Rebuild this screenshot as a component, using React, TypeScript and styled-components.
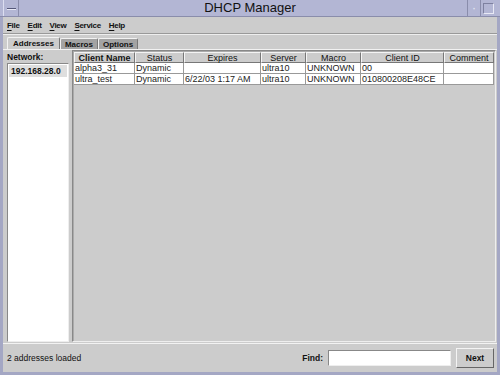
import styled, { createGlobalStyle } from "styled-components"

const GlobalStyle = createGlobalStyle`
  html, body { margin: 0; padding: 0; background: #cccccc; }
  body { font-family: "Liberation Sans", Arial, sans-serif; }
`

const columns = [
  { title: "Client Name", width: 61, bold: true },
  { title: "Status", width: 49 },
  { title: "Expires", width: 77 },
  { title: "Server", width: 45 },
  { title: "Macro", width: 55 },
  { title: "Client ID", width: 83 },
  { title: "Comment", width: 50 },
]

const rows = [
  ["alpha3_31", "Dynamic", "", "ultra10", "UNKNOWN", "00", ""],
  ["ultra_test", "Dynamic", "6/22/03 1:17 AM", "ultra10", "UNKNOWN", "010800208E48CE", ""],
]

export default function App() {
  return (
    <>
      <GlobalStyle />
      <Window>
        <TitleBar>
          <MenuBox><span /></MenuBox>
          <Title>DHCP Manager</Title>
          <WinButtons>
            <MinButton>·</MinButton>
            <MaxButton><i /></MaxButton>
          </WinButtons>
        </TitleBar>
        <Frame>
          <MenuBar>
            {["File", "Edit", "View", "Service", "Help"].map(m => (
              <MenuItem key={m}><u>{m[0]}</u>{m.slice(1)}</MenuItem>
            ))}
          </MenuBar>
          <Separator />
          <Tabs>
            <Tab $active>Addresses</Tab>
            <Tab>Macros</Tab>
            <Tab>Options</Tab>
          </Tabs>
          <Body>
            <NetworkPane>
              <Label>Network:</Label>
              <NetList>
                <NetItem>192.168.28.0</NetItem>
              </NetList>
            </NetworkPane>
            <TablePane>
              <Table>
                <HeaderRow>
                  {columns.map(c => (
                    <HeaderCell key={c.title} $w={c.width} $bold={c.bold}>{c.title}</HeaderCell>
                  ))}
                </HeaderRow>
                {rows.map((r, i) => (
                  <Row key={i}>
                    {r.map((v, j) => (
                      <Cell key={j} $w={columns[j].width}>{v}</Cell>
                    ))}
                  </Row>
                ))}
              </Table>
            </TablePane>
          </Body>
          <StatusBar>
            <StatusText>2 addresses loaded</StatusText>
            <FindLabel>Find:</FindLabel>
            <FindInput />
            <NextButton>Next</NextButton>
          </StatusBar>
        </Frame>
      </Window>
    </>
  )
}

const Window = styled.div`
  width: 500px;
  height: 375px;
  display: flex;
  flex-direction: column;
  background: #cccccc;
  overflow: hidden;
`
const TitleBar = styled.div`
  height: 16px;
  display: flex;
  align-items: stretch;
  background: #b3b6d4;
  border-bottom: 1px solid #8a8dab;
`
const MenuBox = styled.div`
  width: 14px;
  margin-left: 3px;
  border-left: 1px solid #dcdef0;
  border-right: 1px solid #8a8dab;
  display: flex;
  align-items: center;
  justify-content: center;
  span {
    width: 9px;
    height: 1px;
    background: #55587a;
    box-shadow: 0 1px 0 #e8e9f5;
  }
`
const Title = styled.div`
  flex: 1;
  text-align: center;
  font-size: 13px;
  line-height: 16px;
  color: #111;
  padding-left: 14px;
`
const WinButtons = styled.div`
  display: flex;
  margin-right: 4px;
`
const MinButton = styled.div`
  width: 12px;
  border-left: 1px solid #8a8dab;
  font-size: 12px;
  line-height: 16px;
  text-align: center;
  color: #e8e9f5;
`
const MaxButton = styled.div`
  width: 15px;
  border-left: 1px solid #8a8dab;
  display: flex;
  align-items: center;
  justify-content: center;
  i {
    width: 9px;
    height: 9px;
    border: 1px solid #7e81a0;
    border-right-color: #e8e9f5;
    border-bottom-color: #e8e9f5;
  }
`
const Frame = styled.div`
  flex: 1;
  display: flex;
  flex-direction: column;
  border-left: 3px solid #a4a7c4;
  border-right: 3px solid #a4a7c4;
  border-bottom: 3px solid #a4a7c4;
  min-height: 0;
`
const MenuBar = styled.div`
  height: 16px;
  box-sizing: border-box;
  display: flex;
  align-items: center;
  gap: 8px;
  padding: 1px 0 0 4px;
`
const MenuItem = styled.span`
  font-size: 8px;
  font-weight: bold;
  letter-spacing: -0.3px;
  color: #111;
  u { text-decoration-thickness: 1px; text-underline-offset: 2px; }
`
const Separator = styled.div`
  height: 0;
  margin: 0 0 2px;
  border-top: 1px solid #999;
  border-bottom: 1px solid #eee;
`
const Tabs = styled.div`
  display: flex;
  gap: 0;
  padding-left: 4px;
  height: 12px;
  align-items: flex-end;
`
const Tab = styled.div<{ $active?: boolean }>`
  height: ${p => (p.$active ? "12px" : "11px")};
  padding: 0 ${p => (p.$active ? "5px" : "4px")};
  box-sizing: border-box;
  font-size: 8px;
  font-weight: bold;
  line-height: 11px;
  color: #111;
  background: ${p => (p.$active ? "#cccccc" : "#a3a3a3")};
  border-top: 1px solid #f2f2f2;
  border-left: 1px solid #f2f2f2;
  border-right: 1px solid #777;
  border-radius: 2px 2px 0 0;
`
const Body = styled.div`
  flex: 1;
  display: flex;
  gap: 3px;
  padding: 0 1px 0 4px;
  border-top: 1px solid #f2f2f2;
  min-height: 0;
`
const NetworkPane = styled.div`
  width: 62px;
  display: flex;
  flex-direction: column;
  padding-top: 2px;
`
const Label = styled.div`
  font-size: 8.5px;
  font-weight: bold;
  color: #111;
  height: 11px;
`
const NetList = styled.div`
  flex: 1;
  background: #fff;
  border: 1px solid #888;
  border-right-color: #eee;
  border-bottom-color: #eee;
  padding: 1px;
`
const NetItem = styled.div`
  background: #dedede;
  font-size: 8.5px;
  font-weight: bold;
  line-height: 12px;
  padding-left: 2px;
  color: #111;
`
const TablePane = styled.div`
  flex: 1;
  border: 1px solid #888;
  border-right-color: #eee;
  border-bottom-color: #eee;
  box-shadow: inset 1px 1px 0 #aaa;
  padding: 1px;
`
const Table = styled.div`
  display: flex;
  flex-direction: column;
`
const HeaderRow = styled.div`
  display: flex;
  height: 11px;
`
const HeaderCell = styled.div<{ $w: number; $bold?: boolean }>`
  width: ${p => p.$w}px;
  box-sizing: border-box;
  text-align: center;
  font-size: 9px;
  line-height: 10px;
  font-weight: ${p => (p.$bold ? "bold" : "normal")};
  color: #111;
  background: #cccccc;
  border-top: 1px solid #f4f4f4;
  border-left: 1px solid #f4f4f4;
  border-right: 1px solid #777;
  border-bottom: 1px solid #777;
`
const Row = styled.div`
  display: flex;
  height: 11px;
`
const Cell = styled.div<{ $w: number }>`
  width: ${p => p.$w}px;
  box-sizing: border-box;
  background: #fff;
  font-size: 9px;
  line-height: 10px;
  padding-left: 1px;
  color: #222;
  white-space: nowrap;
  overflow: hidden;
  border-right: 1px solid #999;
  border-bottom: 1px solid #999;
`
const StatusBar = styled.div`
  height: 27px;
  display: flex;
  align-items: center;
  padding: 0 3px 1px 4px;
  border-top: 1px solid #f2f2f2;
  margin-top: 1px;
`
const StatusText = styled.div`
  flex: 1;
  font-size: 8.5px;
  color: #111;
`
const FindLabel = styled.div`
  font-size: 8.5px;
  font-weight: bold;
  color: #111;
  margin-right: 5px;
`
const FindInput = styled.input`
  width: 123px;
  height: 16px;
  box-sizing: border-box;
  background: #fff;
  border: 1px solid #888;
  border-right-color: #eee;
  border-bottom-color: #eee;
  outline: none;
  margin-right: 5px;
`
const NextButton = styled.button`
  width: 38px;
  height: 20px;
  font-family: "Liberation Sans", Arial, sans-serif;
  font-size: 8.5px;
  font-weight: bold;
  color: #111;
  background: #cccccc;
  border: 1px solid #f4f4f4;
  border-right-color: #666;
  border-bottom-color: #666;
  padding: 0;
`
